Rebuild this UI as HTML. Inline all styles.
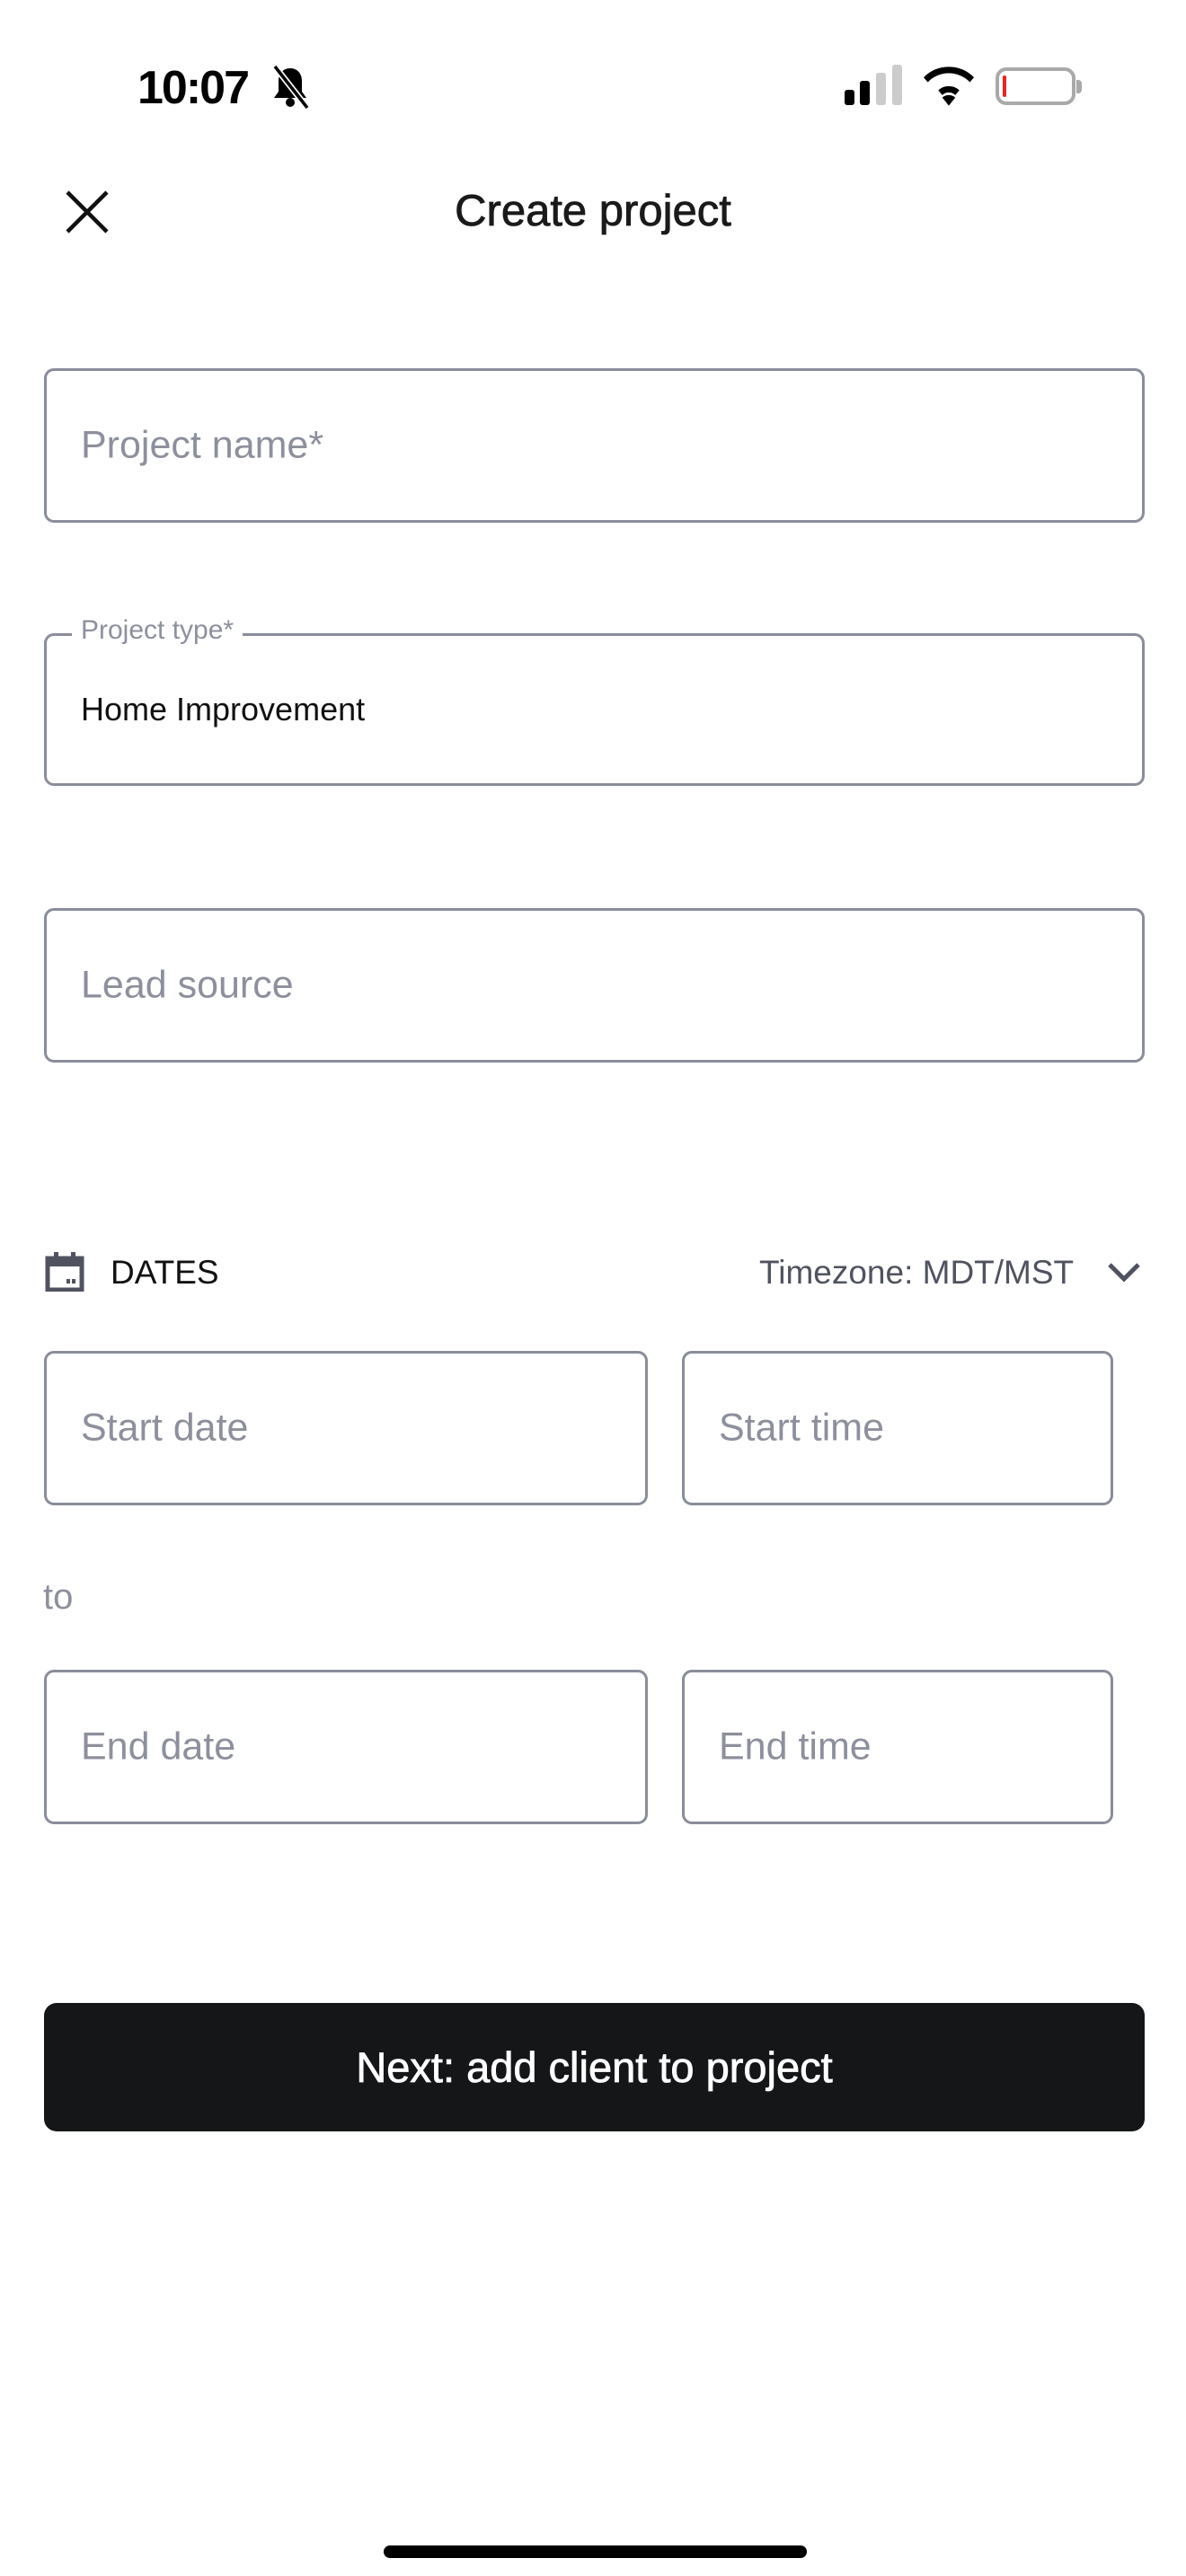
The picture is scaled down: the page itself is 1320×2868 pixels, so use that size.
<!DOCTYPE html>
<html><head><meta charset="utf-8"><style>
*{margin:0;padding:0;box-sizing:border-box}
body{width:1320px;height:2868px;background:#fff;position:relative;overflow:hidden;font-family:"Liberation Sans",sans-serif}
.a{position:absolute}
.f{position:absolute;border:3px solid #8a8d9a;border-radius:11px}
.ph{position:absolute;color:#8d909c;font-size:43px;line-height:1;top:50%;transform:translateY(-50%);left:38px;white-space:nowrap}
</style></head><body>
<div class="a" style="left:153px;top:68px;font-size:52px;font-weight:bold;letter-spacing:-2px;color:#000">10:07</div>
<svg class="a" style="left:300px;top:72px" width="46" height="50" viewBox="0 0 46 50"><path d="M23 4c-8 0-13 6-13 14v12l-5 7h36l-5-7V18C36 10 31 4 23 4z" fill="#000"/><circle cx="23" cy="42" r="5" fill="#000"/><line x1="6" y1="2" x2="42" y2="48" stroke="#fff" stroke-width="7"/><line x1="6" y1="2" x2="42" y2="48" stroke="#000" stroke-width="3.5"/></svg>
<div class="a" style="left:940px;top:100px;width:11px;height:17px;background:#000;border-radius:3px"></div>
<div class="a" style="left:957px;top:90px;width:11px;height:27px;background:#000;border-radius:3px"></div>
<div class="a" style="left:975px;top:81px;width:11px;height:36px;background:#ccc;border-radius:3px"></div>
<div class="a" style="left:993px;top:72px;width:11px;height:45px;background:#ccc;border-radius:3px"></div>
<svg class="a" style="left:1028px;top:74px" width="56" height="44" viewBox="0 0 62 48"><path d="M31 48L23 38a12 12 0 0 1 16 0z" fill="#000"/><path d="M31 24a18 18 0 0 1 13 5l-5 6a11 11 0 0 0-16 0l-5-6a18 18 0 0 1 13-5z" fill="#000"/><path d="M31 0a44 44 0 0 1 31 13l-5 6a36 36 0 0 0-52 0L0 13A44 44 0 0 1 31 0z" fill="#000"/></svg>
<div class="a" style="left:1108px;top:75px;width:89px;height:42px;border:4px solid #a9a9a9;border-radius:12px"></div>
<div class="a" style="left:1116px;top:84px;width:4px;height:24px;background:#e22;border-radius:2px"></div>
<div class="a" style="left:1198px;top:89px;width:6px;height:15px;background:#a9a9a9;border-radius:0 4px 4px 0"></div>
<svg class="a" style="left:72px;top:211px" width="50" height="50" viewBox="0 0 50 50"><path d="M3 3L47 47M47 3L3 47" stroke="#111" stroke-width="4.5"/></svg>
<div class="a" style="left:0;width:1320px;text-align:center;top:207px;font-size:49px;color:#1a1a1a;-webkit-text-stroke:0.8px #1a1a1a">Create project</div>
<div class="f" style="left:49px;top:410px;width:1225px;height:172px"><div class="ph">Project name*</div></div>
<div class="f" style="left:49px;top:705px;width:1225px;height:170px"><div class="ph" style="color:#111;font-size:36px">Home Improvement</div></div>
<div class="a" style="left:80px;top:685px;background:#fff;padding:0 10px;font-size:30px;color:#8d909c;line-height:34px">Project type*</div>
<div class="f" style="left:49px;top:1011px;width:1225px;height:172px"><div class="ph">Lead source</div></div>
<svg class="a" style="left:50px;top:1394px" width="44" height="44" viewBox="0 0 44 44"><rect x="3" y="7" width="38" height="35" fill="none" stroke="#50535f" stroke-width="5"/><rect x="3" y="7" width="38" height="9" fill="#50535f"/><rect x="10" y="0" width="5" height="9" fill="#50535f"/><rect x="29" y="0" width="5" height="9" fill="#50535f"/><rect x="24" y="30" width="4" height="5" fill="#50535f"/><rect x="30" y="30" width="4" height="5" fill="#50535f"/></svg>
<div class="a" style="left:123px;top:1396px;font-size:37px;color:#111">DATES</div>
<div class="a" style="left:845px;top:1396px;font-size:37px;color:#50535f">Timezone: MDT/MST</div>
<svg class="a" style="left:1232px;top:1404px" width="38" height="24" viewBox="0 0 38 24"><path d="M3 4L19 20L35 4" fill="none" stroke="#50535f" stroke-width="5"/></svg>
<div class="f" style="left:49px;top:1504px;width:672px;height:172px"><div class="ph">Start date</div></div>
<div class="f" style="left:759px;top:1504px;width:480px;height:172px"><div class="ph">Start time</div></div>
<div class="a" style="left:48px;top:1756px;font-size:40px;color:#8d909c">to</div>
<div class="f" style="left:49px;top:1859px;width:672px;height:172px"><div class="ph">End date</div></div>
<div class="f" style="left:759px;top:1859px;width:480px;height:172px"><div class="ph">End time</div></div>
<div class="a" style="left:49px;top:2230px;width:1225px;height:143px;background:#151618;border-radius:14px;color:#fff;font-size:47px;text-align:center;line-height:143px;-webkit-text-stroke:0.8px #fff">Next: add client to project</div>
<div class="a" style="left:427px;top:2834px;width:471px;height:14px;background:#000;border-radius:7px"></div>
</body></html>
